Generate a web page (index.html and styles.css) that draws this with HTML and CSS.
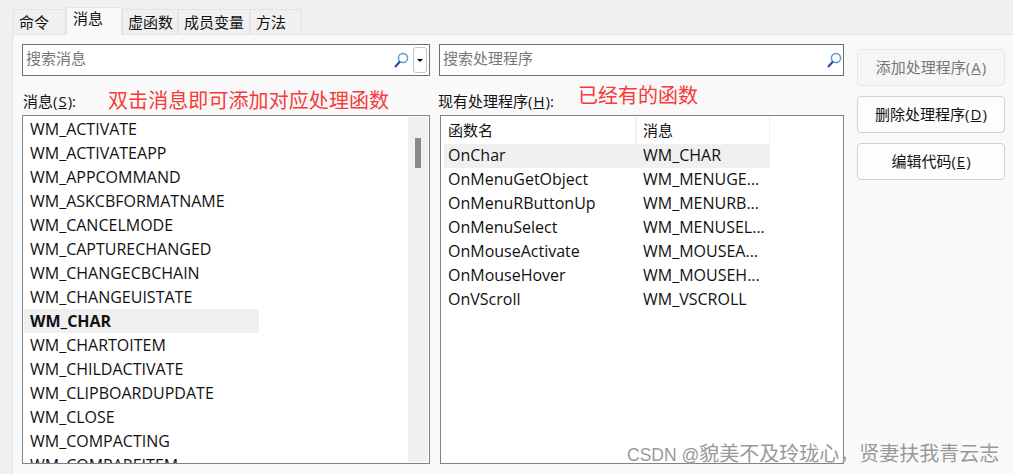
FILE: index.html
```html
<!DOCTYPE html>
<html lang="zh">
<head>
<meta charset="utf-8">
<title>类向导</title>
<link rel="stylesheet" href="styles.css">
</head>
<body>
<nav class="tabs">
  <span class="tab t1">命令</span>
  <span class="tab active">消息</span>
  <span class="tab t3">虚函数</span>
  <span class="tab t4">成员变量</span>
  <span class="tab t5">方法</span>
</nav>
<main class="panel">
  <section class="col left">
    <div class="search-row">
      <div class="search">
        <span class="ph">搜索消息</span>
        <svg class="mag" viewBox="0 0 16 16"><circle cx="10" cy="6" r="4.6" fill="none" stroke="#5b9bd5" stroke-width="1.5"/><path d="M7 9.5 L2 15" stroke="#1f4e8c" stroke-width="2"/></svg>
        <span class="drop"><i></i></span>
      </div>
    </div>
    <label class="lbl">消息(<u>S</u>):</label>
    <div class="list">
      <ul class="items">
        <li>WM_ACTIVATE</li>
        <li>WM_ACTIVATEAPP</li>
        <li>WM_APPCOMMAND</li>
        <li>WM_ASKCBFORMATNAME</li>
        <li>WM_CANCELMODE</li>
        <li>WM_CAPTURECHANGED</li>
        <li>WM_CHANGECBCHAIN</li>
        <li>WM_CHANGEUISTATE</li>
        <li class="sel">WM_CHAR</li>
        <li>WM_CHARTOITEM</li>
        <li>WM_CHILDACTIVATE</li>
        <li>WM_CLIPBOARDUPDATE</li>
        <li>WM_CLOSE</li>
        <li>WM_COMPACTING</li>
        <li>WM_COMPAREITEM</li>
      </ul>
      <div class="scroll"><div class="thumb"></div></div>
    </div>
  </section>
  <section class="col right">
    <div class="search-row">
      <div class="search">
        <span class="ph">搜索处理程序</span>
        <svg class="mag" viewBox="0 0 16 16"><circle cx="10" cy="6" r="4.6" fill="none" stroke="#5b9bd5" stroke-width="1.5"/><path d="M7 9.5 L2 15" stroke="#1f4e8c" stroke-width="2"/></svg>
      </div>
    </div>
    <label class="lbl lbl2">现有处理程序(<u>H</u>):</label>
    <div class="list table">
      <div class="thead"><span class="c1">函数名</span><span class="c2">消息</span></div>
      <div class="tr on"><span class="c1">OnChar</span><span class="c2">WM_CHAR</span></div>
      <div class="tr"><span class="c1">OnMenuGetObject</span><span class="c2">WM_MENUGE...</span></div>
      <div class="tr"><span class="c1">OnMenuRButtonUp</span><span class="c2">WM_MENURB...</span></div>
      <div class="tr"><span class="c1">OnMenuSelect</span><span class="c2">WM_MENUSEL...</span></div>
      <div class="tr"><span class="c1">OnMouseActivate</span><span class="c2">WM_MOUSEA...</span></div>
      <div class="tr"><span class="c1">OnMouseHover</span><span class="c2">WM_MOUSEH...</span></div>
      <div class="tr"><span class="c1">OnVScroll</span><span class="c2">WM_VSCROLL</span></div>
    </div>
  </section>
  <aside class="buttons">
    <button class="btn off">添加处理程序(<u>A</u>)</button>
    <button class="btn">删除处理程序(<u>D</u>)</button>
    <button class="btn">编辑代码(<u>E</u>)</button>
  </aside>
</main>
<span class="note n1">双击消息即可添加对应处理函数</span>
<span class="note n2">已经有的函数</span>
<span class="mark">CSDN @<span class="mark-cjk">貌美不及玲珑心，贤妻扶我青云志</span></span>
</body>
</html>
```

FILE: styles.css
```css
* { box-sizing: border-box; }
html, body { height: 100%; }
body {
  margin: 0;
  width: 1013px;
  height: 474px;
  overflow: hidden;
  position: relative;
  background: #f0f0f0;
  color: #111;
  font: 16px/20px "Open Sans", "Noto Sans CJK SC", sans-serif;
  display: flex;
  flex-direction: column;
}
.tabs {
  height: 35px;
  flex: none;
  padding: 7px 0 0 13px;
  display: flex;
  align-items: flex-end;
  position: relative;
  z-index: 1;
  margin-bottom: -1px;
}
.tab {
  height: 26px;
  border: 1px solid #e3e3e3;
  padding: 2px 0 0 5px;
  font-size: 15px;
  white-space: nowrap;
  background: #f0f0f0;
}
.t1 { width: 53px; }
.t3 { width: 56px; }
.t4 { width: 72px; }
.t5 { width: 52px; }
.active {
  width: 56px;
  height: 28px;
  padding: 0 0 0 6px;
  background: #f9f9f9;
  border-bottom-color: #f9f9f9;
}
.panel {
  margin-left: 12px;
  flex: 1;
  min-height: 0;
  background: #f9f9f9;
  border-top: 1px solid #e3e3e3;
  border-left: 1px solid #e3e3e3;
  padding: 9px 8px 10px 9px;
  display: flex;
}
.col { display: flex; flex-direction: column; min-height: 0; }
.left { width: 408px; margin-right: 9px; }
.right { width: 405px; margin-right: 13px; }
.search-row { height: 32px; flex: none; }
.search {
  height: 32px;
  background: #fff;
  border: 1px solid #6f6f6f;
  display: flex;
  align-items: center;
  padding: 0 0 3px 3px;
}
.ph { flex: 1; color: #777; font-size: 15px; margin-bottom: 2px; }
.mag { width: 16px; height: 16px; margin: 3px 1px 0 0; }
.drop {
  width: 14px;
  height: 26px;
  border: 1px solid #c4c4c4;
  border-radius: 3px;
  margin: 3px 2px 0 3px;
  display: flex;
  align-items: center;
  justify-content: center;
}
.drop i {
  width: 0; height: 0;
  border: 3px solid transparent;
  border-top: 3px solid #000;
  border-bottom: 0;
}
.lbl { height: 39px; flex: none; padding-top: 15px; margin-left: 1px; font-size: 15px; line-height: 20px; }
.lbl2 { margin-left: -1px; }
.lbl u { margin: 0 1px; }
.list {
  flex: 1;
  min-height: 0;
  background: #fff;
  border: 1px solid #82828a;
  position: relative;
  overflow: hidden;
}
.items { list-style: none; margin: 0; padding: 1px 0 0 1px; }
.items li { height: 24px; line-height: 24px; padding-left: 6px; width: 235px; white-space: nowrap; }
.items .sel { background: #f0f0f0; font-weight: 700; }
.scroll {
  position: absolute;
  top: 1px; right: 1px; bottom: 1px;
  width: 20px;
  background: #f0f0f0;
}
.thumb { position: absolute; left: 7px; top: 21px; width: 6px; height: 30px; background: #8a8a8a; }
.table { margin-left: 1px; padding: 1px 0 0 3px; }
.thead, .tr { display: flex; width: 326px; }
.thead { height: 27px; align-items: center; }
.thead .c1 { border-right: 2px solid #f0f0f0; height: 27px; line-height: 26px; font-size: 15px; }
.thead .c2 { border-right: 1px solid #f0f0f0; height: 27px; line-height: 26px; font-size: 15px; }
.tr { height: 24px; line-height: 23px; }
.on { background: #f0f0f0; }
.c1 { width: 193px; padding-left: 4px; white-space: nowrap; }
.c2 { width: 133px; padding-left: 6px; white-space: nowrap; }
.buttons { display: flex; flex-direction: column; gap: 10px; padding-top: 5px; width: 148px; }
.btn {
  height: 37px;
  margin: 0;
  padding: 0 0 2px;
  border: 1px solid #d0d0d0;
  border-radius: 4px;
  background: #fdfdfd;
  color: #111;
  font: 15px "Open Sans", "Noto Sans CJK SC", sans-serif;
}
.btn u { margin: 0 1px; }
.btn.off { background: #f6f6f6; border-color: #e6e6e6; color: #777; }
.note {
  position: absolute;
  color: #f73a3a;
  font-size: 20px;
  line-height: 24px;
}
.n1 { left: 108px; top: 89px; letter-spacing: .08px; }
.n2 { left: 578px; top: 84px; }
.mark {
  position: absolute;
  left: 627px;
  top: 441px;
  color: #999;
  font: 17.5px/26px "Liberation Sans", "Noto Sans CJK SC", sans-serif;
  text-shadow: 0 0 1px #fff;
  white-space: nowrap;
}
.mark-cjk { font-size: 20px; }
```
